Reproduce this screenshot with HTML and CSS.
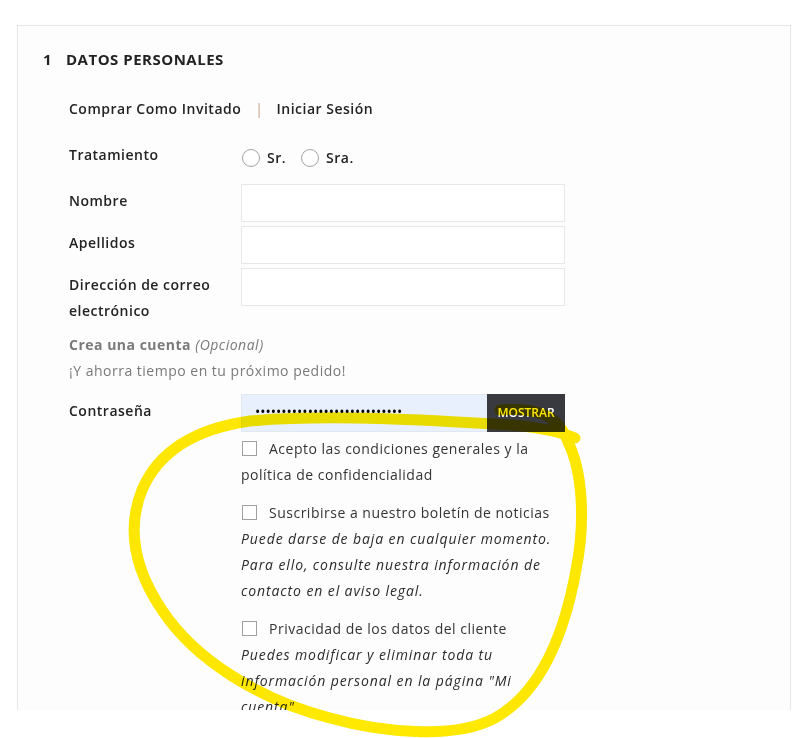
FILE: index.html
```html
<!DOCTYPE html>
<html lang="es">
<head>
<meta charset="utf-8">
<title>Datos personales</title>
<link rel="stylesheet" href="styles.css">
</head>
<body>
<div class="page">
  <section class="card">
    <h2 class="step-title"><span class="step-num">1</span>DATOS PERSONALES</h2>
    <div class="step-body">
      <p class="auth-links"><a class="auth-link">Comprar Como Invitado</a><span class="sep">|</span><a class="auth-link">Iniciar Sesión</a></p>

      <form class="form">
        <div class="row row-radio">
          <span class="label">Tratamiento</span>
          <div class="radios">
            <label class="radio"><span class="radio-dot"></span><span class="radio-text">Sr.</span></label>
            <label class="radio"><span class="radio-dot"></span><span class="radio-text">Sra.</span></label>
          </div>
        </div>
        <div class="row">
          <label class="label" for="f-nombre">Nombre</label>
          <input class="input" id="f-nombre" type="text">
        </div>
        <div class="row">
          <label class="label" for="f-apellidos">Apellidos</label>
          <input class="input" id="f-apellidos" type="text">
        </div>
        <div class="row">
          <label class="label" for="f-email">Dirección de correo electrónico</label>
          <input class="input" id="f-email" type="text">
        </div>

        <div class="account-note">
          <p class="account-title"><strong>Crea una cuenta</strong> <em>(Opcional)</em></p>
          <p class="account-sub">¡Y ahorra tiempo en tu próximo pedido!</p>
        </div>

        <div class="row row-password">
          <span class="label">Contraseña</span>
          <div class="password">
            <span class="password-value">••••••••••••••••••••••••••••</span>
            <span class="password-btn">MOSTRAR</span>
          </div>
        </div>

        <div class="consents">
          <div class="consent">
            <p class="consent-text"><span class="checkbox"></span>Acepto las condiciones generales y la política de confidencialidad</p>
          </div>
          <div class="consent">
            <p class="consent-text"><span class="checkbox"></span>Suscribirse a nuestro boletín de noticias</p>
            <p class="consent-note">Puede darse de baja en cualquier momento. Para ello, consulte nuestra información de contacto en el aviso legal.</p>
          </div>
          <div class="consent">
            <p class="consent-text"><span class="checkbox"></span>Privacidad de los datos del cliente</p>
            <p class="consent-note">Puedes modificar y eliminar toda tu información personal en la página "Mi cuenta".</p>
          </div>
        </div>
      </form>
    </div>
  </section>

  <svg class="annotation" width="805" height="738" viewBox="0 0 805 738" aria-hidden="true">
    <path d="M 500 410 C 535 407, 558 414, 568 442 C 582 470, 586 520, 576 570 C 566 625, 545 690, 495 718 C 455 740, 380 732, 330 718 C 260 700, 195 660, 162 610 C 135 570, 126 530, 142 490 C 160 448, 200 428, 250 421 C 330 414, 430 420, 510 425 C 540 427, 560 432, 575 438" />
  </svg>
</div>
</body>
</html>
```

FILE: styles.css
```css
* { box-sizing: border-box; }

html, body {
  margin: 0;
  padding: 0;
  background: #ffffff;
}

body {
  font-family: "Open Sans", "DejaVu Sans", sans-serif;
  font-size: 14px;
  letter-spacing: 0.5px;
  color: #232323;
}

.page {
  position: relative;
  width: 805px;
  height: 738px;
  padding: 25px 0 0 17px;
  overflow: hidden;
}

.card {
  width: 774px;
  height: 685px;
  border: 1px solid #e6e6e6;
  border-bottom: none;
  padding: 23px 0 0 25px;
  overflow: hidden;
  background: #fdfdfd;
}

.step-title {
  margin: 0;
  font-size: 15px;
  font-weight: 700;
  line-height: 20px;
  color: #232323;
}

.step-num {
  display: inline-block;
  width: 23px;
}

.step-body {
  margin-left: 26px;
}

.auth-links {
  margin: 27px 0 0;
  line-height: 26px;
  font-weight: 600;
  color: #232323;
}

.sep {
  margin: 0 13px 0 14px;
  font-weight: 400;
  color: #c9a182;
}

.form {
  margin-top: 16px;
  display: flex;
  flex-direction: column;
}

.row {
  display: flex;
  align-items: flex-start;
  margin-top: 4px;
}

.row-radio {
  margin-top: 0;
  height: 42px;
}

.label {
  width: 172px;
  flex: none;
  padding-top: 4px;
  padding-right: 20px;
  line-height: 26px;
  font-weight: 600;
  color: #232323;
}

.radios {
  display: flex;
  align-items: center;
  padding-top: 7px;
  height: 33px;
}

.radio {
  display: flex;
  align-items: center;
  margin-right: 14px;
  line-height: 26px;
  font-weight: 600;
}

.radio-dot {
  width: 18px;
  height: 18px;
  margin-left: 1px;
  border: 1px solid #a3a3a3;
  border-radius: 50%;
  background: #fff;
}

.radio-text {
  margin-left: 7px;
}

.input {
  width: 324px;
  height: 38px;
  margin: 0;
  border: 1px solid #e8e8e8;
  background: #fff;
  font: inherit;
  padding: 0 14px;
}

.account-note {
  margin-top: 8px;
  color: #7a7a7a;
}

.account-title,
.account-sub {
  margin: 0;
  line-height: 26px;
}

.account-title strong {
  font-weight: 700;
}

.account-title em {
  font-style: italic;
}

.row-password {
  margin-top: 10px;
}

.password {
  display: flex;
  width: 324px;
  height: 38px;
}

.password-value {
  flex: 1;
  background: #e8f0fe;
  border: 1px solid #e1e8f2;
  border-right: none;
  padding-left: 13px;
  line-height: 34px;
  color: #000;
  letter-spacing: 0;
  overflow: hidden;
  white-space: nowrap;
}

.password-btn {
  width: 78px;
  flex: none;
  background: #393a3f;
  color: #ffffff;
  font-size: 12px;
  font-weight: 600;
  letter-spacing: 0;
  line-height: 38px;
  text-align: center;
}

.consents {
  margin: 4px 0 0 172px;
  width: 324px;
}

.consent + .consent {
  margin-top: 12px;
}

.consent-text,
.consent-note {
  margin: 0;
  line-height: 26px;
  color: #343434;
}

.consent-note {
  font-style: italic;
  letter-spacing: 0.9px;
  color: #2b2b2b;
}

.checkbox {
  display: inline-block;
  width: 15px;
  height: 15px;
  margin: 0 12px 0 1px;
  border: 1px solid #a0a0a0;
  background: #fff;
  vertical-align: -2px;
}

.annotation {
  position: absolute;
  left: 0;
  top: 0;
  pointer-events: none;
  mix-blend-mode: multiply;
}

.annotation path {
  fill: none;
  stroke: #ffe900;
  stroke-width: 11;
  stroke-linecap: round;
  stroke-linejoin: round;
}
```
